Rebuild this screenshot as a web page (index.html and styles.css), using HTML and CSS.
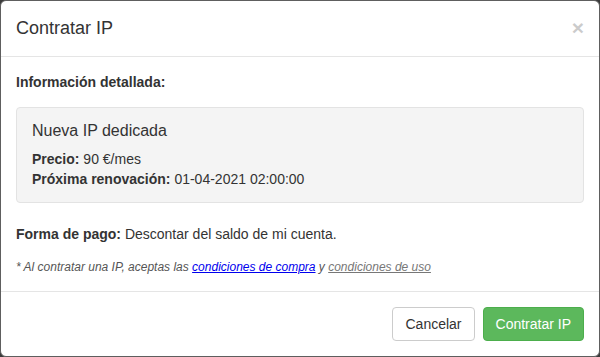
FILE: index.html
```html
<!DOCTYPE html>
<html lang="es">
<head>
    <meta charset="UTF-8">
    <meta name="viewport" content="width=device-width, initial-scale=1.0">
    <title>Contratar IP</title>
    <link rel="stylesheet" href="styles.css">
</head>
<body>
    <div class="modal">
        <div class="modal-header">
            <h4 class="modal-title">Contratar IP</h4>
            <button class="close" type="button">&times;</button>
        </div>
        <div class="modal-body">
            <p class="section-label">Información detallada:</p>
            <div class="well">
                <div class="well-title">Nueva IP dedicada</div>
                <div><b>Precio:</b> 90 €/mes</div>
                <div><b>Próxima renovación:</b> 01-04-2021 02:00:00</div>
            </div>
            <p class="payment"><b>Forma de pago:</b> Descontar del saldo de mi cuenta.</p>
            <p class="note">* Al contratar una IP, aceptas las <a href="#" class="link-buy">condiciones de compra</a> y <a href="#" class="link-use">condiciones de uso</a></p>
        </div>
        <div class="modal-footer">
            <button class="btn btn-default" type="button">Cancelar</button>
            <button class="btn btn-success" type="button">Contratar IP</button>
        </div>
    </div>
</body>
</html>
```

FILE: styles.css
```css
html, body {
    margin: 0;
    padding: 0;
    height: 357px;
    overflow: hidden;
}

body {
    font-family: "Liberation Sans", Arial, sans-serif;
    font-size: 14px;
    line-height: 20px;
    color: #333;
    background-color: #3b3b3b;
}

.modal {
    width: 600px;
    height: 357px;
    box-sizing: border-box;
    background: #fff;
    border: 1px solid #5e5e5e;
    border-radius: 6px;
}

.modal-header {
    display: flex;
    justify-content: space-between;
    align-items: flex-start;
    padding: 15px;
    border-bottom: 1px solid #e5e5e5;
}

.modal-title {
    margin: 0;
    font-size: 18px;
    line-height: 25px;
    font-weight: normal;
}

.close {
    margin-top: 1px;
    padding: 0;
    border: none;
    background: none;
    font-family: "Liberation Sans", Arial, sans-serif;
    font-size: 21px;
    font-weight: bold;
    line-height: 1;
    color: #000;
    opacity: 0.2;
    cursor: pointer;
}

.modal-body {
    padding: 15px;
}

.modal-body p {
    margin: 0;
}

.section-label {
    font-weight: bold;
    margin-bottom: 15px !important;
}

.well {
    margin-bottom: 21px;
    padding: 12px 15px 13px;
    background-color: #f4f4f4;
    border: 1px solid #e3e3e3;
    border-radius: 4px;
}

.well-title {
    font-size: 16px;
    line-height: 22px;
    margin-bottom: 7px;
}

.payment {
    margin-bottom: 14px !important;
}

.note {
    font-size: 12px;
    line-height: 18px;
    font-style: italic;
    color: #555;
}

.link-buy {
    color: #00e;
}

.link-use {
    color: #777;
}

.modal-footer {
    display: flex;
    justify-content: flex-end;
    gap: 8px;
    padding: 15px;
    border-top: 1px solid #e5e5e5;
}

.btn {
    padding: 6px 12px;
    font-family: "Liberation Sans", Arial, sans-serif;
    font-size: 14px;
    line-height: 20px;
    border: 1px solid transparent;
    border-radius: 4px;
    cursor: pointer;
}

.btn-default {
    color: #333;
    background-color: #fff;
    border-color: #ccc;
}

.btn-success {
    color: #fff;
    background-color: #5cb85c;
    border-color: #4cae4c;
}
```
